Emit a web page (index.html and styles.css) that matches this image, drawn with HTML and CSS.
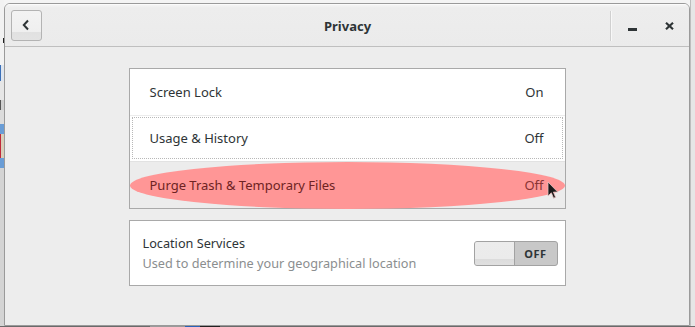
FILE: index.html
```html
<!DOCTYPE html>
<html>
<head>
<meta charset="utf-8">
<link rel="stylesheet" href="styles.css">
</head>
<body>
<div class="desk-left">
  <span class="dl dl-white"></span>
  <span class="dl dl-mark"></span>
  <span class="dl dl-white2"></span>
  <span class="dl dl-blue1"></span>
  <span class="dl dl-grey1"></span>
  <span class="dl dl-dark"></span>
  <span class="dl dl-grey2"></span>
  <span class="dl dl-blue2"></span>
  <span class="dl dl-beige"></span>
  <span class="dl dl-blue2"></span>
  <span class="dl dl-rest"></span>
</div>
<div class="window">
  <header class="headerbar">
    <div class="hb-start">
      <button class="back-btn" aria-label="Back">
        <svg width="10" height="12" viewBox="0 0 10 12"><path d="M7 1.5 L2.8 6 L7 10.5" fill="none" stroke="#2e3436" stroke-width="2"/></svg>
      </button>
    </div>
    <div class="hb-title">Privacy</div>
    <div class="hb-end">
      <span class="hb-sep"></span>
      <button class="wm-btn" aria-label="Minimize"><span class="min-bar"></span></button>
      <button class="wm-btn" aria-label="Close">
        <svg width="9" height="8" viewBox="0 0 9 8"><path d="M1 0.8 L8 7.2 M8 0.8 L1 7.2" stroke="#2e3436" stroke-width="2.2"/></svg>
      </button>
    </div>
  </header>
  <main class="content">
    <section class="panel list">
      <div class="row"><span class="label">Screen Lock</span><span class="value">On</span></div>
      <div class="row focused"><span class="label">Usage &amp; History</span><span class="value">Off</span></div>
      <div class="row marked">
        <span class="mark"></span>
        <span class="label">Purge Trash &amp; Temporary Files</span><span class="value">Off</span>
        <svg class="cursor" width="12" height="19" viewBox="0 0 12 19"><path d="M1 1 L1 15 L4.3 11.8 L6.6 17.2 L8.6 16.3 L6.4 11.1 L10.8 11.1 Z" fill="#1a1a1a" stroke="#e9c3c3" stroke-width="0.8"/></svg>
      </div>
    </section>
    <section class="panel loc">
      <div class="loc-text">
        <div class="loc-title">Location Services</div>
        <div class="loc-sub">Used to determine your geographical location</div>
      </div>
      <div class="switch">
        <span class="knob"></span>
        <span class="switch-label">OFF</span>
      </div>
    </section>
  </main>
</div>
<div class="desk-right"></div>
<div class="desk-bottom">
  <span class="db db-a"></span><span class="db db-b"></span><span class="db db-c"></span><span class="db db-d"></span><span class="db db-e"></span>
</div>
</body>
</html>
```
FILE: styles.css
```css
* { box-sizing: border-box; }
html, body { margin: 0; padding: 0; }
body {
  width: 695px;
  height: 327px;
  overflow: hidden;
  display: flex;
  flex-wrap: wrap;
  align-content: flex-start;
  background: #f4f4f4;
  font-family: "Noto Sans", "DejaVu Sans", sans-serif;
  color: #2e3436;
}
.desk-left {
  width: 4px;
  height: 326px;
  display: flex;
  flex-direction: column;
}
.dl { display: block; width: 4px; }
.dl-white { height: 38px; background: #f2f2f2; }
.dl-mark { height: 5px; background: #f2f2f2; border-right: 1px solid #222; }
.dl-white2 { height: 22px; background: #f2f2f2; }
.dl-blue1 { height: 16px; background: #dfe6ef; border-left: 1px solid #3b70b8; }
.dl-grey1 { height: 19px; background: #e6e6e6; }
.dl-dark { height: 10px; background: #d0d0d0; border-left: 1px solid #555; }
.dl-grey2 { height: 14px; background: #dcdcdc; }
.dl-blue2 { height: 10px; background: #6a9dd6; }
.dl-beige { height: 24px; background: #d9cfb9; border-left: 1px solid #c0283a; }
.dl-rest { flex: 1; background: #d4d4d4; }

.window {
  width: 686px;
  height: 323px;
  margin-top: 3px;
  border: 1px solid #9a9a9a;
  border-radius: 6px 6px 0 0;
  background: #ededed;
  display: flex;
  flex-direction: column;
  overflow: hidden;
}
.desk-right {
  width: 5px;
  height: 326px;
  background: #e6e6e6;
  border-left: 1px solid #bdbdbd;
}
.desk-bottom {
  width: 695px;
  height: 1px;
  display: flex;
  background: #6a6a6a;
}
.db { display: block; height: 1px; }
.db-a { width: 150px; background: #6a6a6a; }
.db-b { width: 35px; background: #9a9a9a; }
.db-c { width: 15px; background: #2a62b8; }
.db-d { width: 20px; background: #222; }
.db-e { flex: 1; background: #6a6a6a; }

.headerbar {
  height: 43px;
  flex: none;
  display: grid;
  grid-template-columns: 1fr auto 1fr;
  align-items: center;
  padding: 0 5px 0 6px;
  background: linear-gradient(#f4f4f4, #ededed 3px, #ebebeb);
  border-top: 1px solid #fbfbfb;
  border-bottom: 1px solid #bfbfbf;
}
.hb-start { display: flex; }
.back-btn {
  width: 31px;
  height: 31px;
  padding: 0;
  border: 1px solid #b3b3b3;
  border-radius: 3px;
  background: linear-gradient(#f3f3f3, #efefef 72%, #e1e1e1 74%, #e3e3e3);
  display: flex;
  align-items: center;
  justify-content: center;
}
.back-btn svg { margin-left: -1px; margin-bottom: 2px; }
.hb-title {
  font-weight: bold;
  font-size: 13px;
  color: #2e3436;
}
.hb-end {
  display: flex;
  justify-content: flex-end;
  align-items: center;
}
.hb-sep {
  width: 2px;
  height: 30px;
  border-left: 1px solid #d0d0d0;
  border-right: 1px solid #f8f8f8;
  margin-right: 5px;
}
.wm-btn {
  width: 30px;
  height: 30px;
  padding: 0;
  border: 0;
  background: transparent;
  display: flex;
  align-items: center;
  justify-content: center;
}
.wm-btn + .wm-btn { margin-left: 7px; }
.min-bar {
  display: block;
  width: 9px;
  height: 3px;
  margin-top: 7px;
  background: #2e3436;
}

.content {
  flex: 1;
  display: flex;
  flex-direction: column;
  align-items: center;
  padding-top: 21px;
}
.panel {
  width: 437px;
  background: #fff;
  border: 1px solid #a9a9a9;
}
.list { display: flex; flex-direction: column; }
.row {
  height: 46px;
  display: flex;
  align-items: center;
  justify-content: space-between;
  padding: 0 21px 1px 20px;
  font-size: 13px;
  position: relative;
}
.row + .row { border-top: 1px solid #ececec; }
.row.focused {
  outline: 1px dotted #b8b8b8;
  outline-offset: -3px;
}
.row.marked {
  height: 47px;
  background: #ececec;
  border-top-color: #e2e2e2;
}
.row .label, .row .value { position: relative; }
.row.marked .label { color: #6e2323; }
.row.marked .value { color: #8a3434; }
.mark {
  position: absolute;
  left: 0;
  top: 0;
  width: 435px;
  height: 47px;
  border-radius: 50%;
  background: #ff9696;
}
.cursor {
  position: absolute;
  left: 417px;
  top: 19px;
}

.loc {
  margin-top: 11px;
  height: 66px;
  display: flex;
  align-items: center;
  justify-content: space-between;
  padding: 0 7px 0 13px;
}
.loc-title { font-size: 12.7px; color: #2e3436; margin-bottom: 2px; }
.loc-sub { font-size: 12.7px; color: #8b8e8f; }
.switch {
  width: 84px;
  height: 25px;
  border: 1px solid #a2a2a2;
  border-radius: 3px;
  background: #c8c8c8;
  display: flex;
  overflow: hidden;
}
.knob {
  width: 40px;
  height: 100%;
  background: linear-gradient(#ececec, #ebebeb 72%, #dcdcdc 76%, #e0e0e0);
  border-right: 1px solid #a2a2a2;
}
.switch-label {
  flex: 1;
  display: flex;
  align-items: center;
  justify-content: center;
  font-size: 11px;
  font-weight: bold;
  color: #2e3436;
  letter-spacing: 0.5px;
}
```
